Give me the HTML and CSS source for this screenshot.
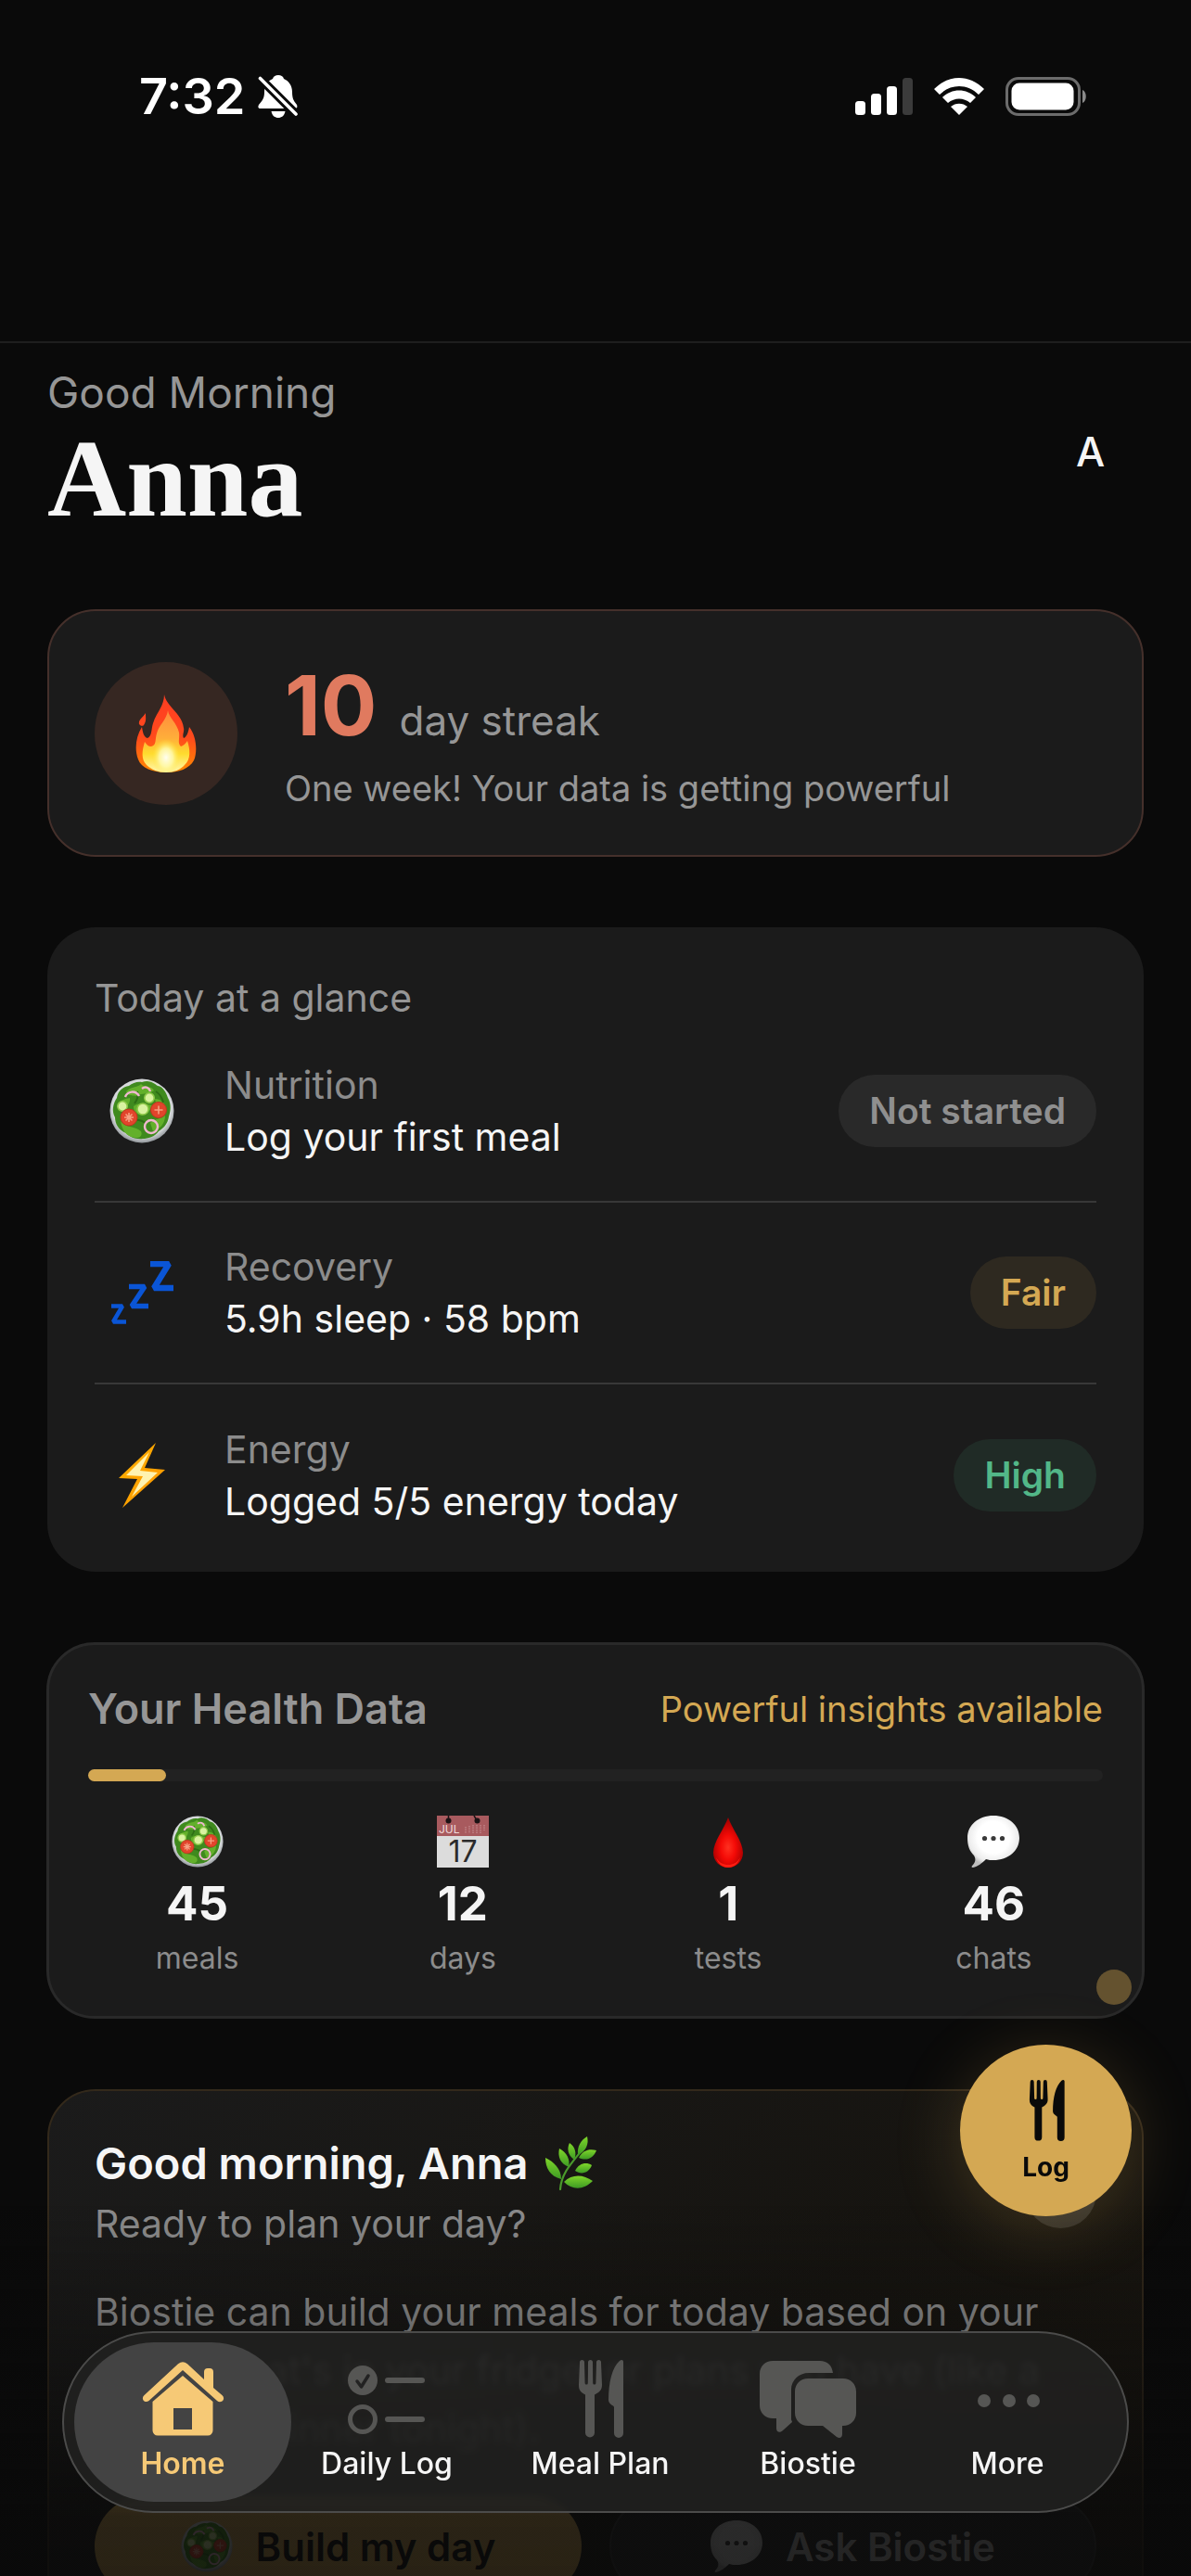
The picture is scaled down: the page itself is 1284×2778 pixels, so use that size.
FILE: index.html
```html
<!DOCTYPE html>
<html lang="en">
<head>
<meta charset="utf-8">
<meta name="viewport" content="width=device-width, initial-scale=1">
<title>Biostie – Home</title>
<link rel="stylesheet" href="styles.css">
</head>
<body>
<svg class="sprite" aria-hidden="true">
  <defs>
    <radialGradient id="gPlate" cx="50%" cy="45%" r="54%"><stop offset=".85" stop-color="#d6d9db"/><stop offset="1" stop-color="#979ca0"/></radialGradient>
    <linearGradient id="gFlame" x1="0" y1="0" x2="0" y2="1"><stop offset="0" stop-color="#ff3d22"/><stop offset=".55" stop-color="#ff4a1c"/><stop offset="1" stop-color="#ff8a00"/></linearGradient>
    <linearGradient id="gFlameIn" x1="0" y1="0" x2="0" y2="1"><stop offset="0" stop-color="#ff8a3c"/><stop offset=".45" stop-color="#ffae3a"/><stop offset=".7" stop-color="#ffdc2e"/><stop offset="1" stop-color="#fff7b0"/></linearGradient>
    <radialGradient id="gCore"><stop offset="0" stop-color="#fffef0"/><stop offset=".5" stop-color="#fff8a8" stop-opacity=".9"/><stop offset="1" stop-color="#ffe53b" stop-opacity="0"/></radialGradient>
    <linearGradient id="gBolt" x1="0" y1="0" x2="1" y2="1"><stop offset="0" stop-color="#ffb300"/><stop offset="1" stop-color="#ff9500"/></linearGradient>
    <radialGradient id="gDrop" cx="50%" cy="60%" r="55%"><stop offset="0" stop-color="#ff3020"/><stop offset=".45" stop-color="#f40a06"/><stop offset="1" stop-color="#a80000"/></radialGradient>
    <radialGradient id="gBubble" cx="50%" cy="42%" r="56%"><stop offset=".55" stop-color="#ffffff"/><stop offset=".85" stop-color="#ececec"/><stop offset="1" stop-color="#bdbdbd"/></radialGradient>
    <linearGradient id="gLeaf" x1="0" y1="0" x2="0" y2="1"><stop offset="0" stop-color="#7fd62a"/><stop offset="1" stop-color="#3d9a24"/></linearGradient>
  </defs>

  <symbol id="salad" viewBox="0 0 70 70">
    <circle cx="35" cy="35" r="34.5" fill="url(#gPlate)"/>
    <path d="M35 4c8-3 13 1 17 4 6 1 9 7 11 13 4 7 3 14 1 20-1 8-6 13-11 16-4 6-12 8-17 8-8 1-14-2-18-6C10 56 6 49 6 42 2 35 4 27 8 21c1-8 7-12 13-13 4-3 9-5 14-4z" fill="#3f8a1e"/>
    <path d="M18 14c6-6 13-4 16-8 4 5 11 1 14 7-6 5-14 2-18 6-5-1-9 1-12-5zM8 30c3-7 9-8 14-9 1 6-4 8-5 13-4 1-7 0-9-4zM26 30c6-5 14-2 20-1-1 7-7 7-11 11-5-1-9-4-9-10zM49 22c6 0 11 4 12 10-6 2-11-3-12-10zM44 48c5-5 12-4 16-8 0 9-6 15-13 17zM12 46c6 8 16 5 22 11 2 4-1 7-4 7-9 0-16-5-18-18z" fill="#63b02b"/>
    <path d="M22 46c6-2 12-2 18 3M30 14c2 5 0 9-3 13M50 14c5 3 7 8 8 12" fill="none" stroke="#2d6d15" stroke-width="2"/>
    <g fill="#d9f2a0" stroke="#8fc94a" stroke-width="1.6">
      <circle cx="43" cy="21" r="5.2"/><circle cx="14" cy="30" r="5.2"/><circle cx="36" cy="33" r="6"/>
    </g>
    <g fill="none" stroke="#f0b8d0" stroke-width="2.400"><path d="M17 20c2-6 11-8 15-1M35 11c4-3 8-1 9 3"/><circle cx="45" cy="52" r="7"/></g>
    <g fill="#e2452c" stroke="#c2351f" stroke-width="1"><circle cx="21" cy="42" r="9"/><circle cx="53" cy="34" r="8.500"/></g>
    <g stroke="#f6a183" stroke-width="1.6"><path d="M16 42h10M21 37v10M48.500 34h9M53 29.500v9M17.500 38.500l7 7M24.500 38.500l-7 7"/></g>
  </symbol>

  <symbol id="utensils" viewBox="0 0 50 84">
    <path fill="currentColor" d="M3 2.500a2.500 2.500 0 0 1 5 0l.6 22.500a1.600 1.600 0 0 0 3.200 0L12 2.500a2.500 2.500 0 0 1 5 0l.2 22.500a1.600 1.600 0 0 0 3.200 0L21 2.500a2.500 2.500 0 0 1 5 0l1 24c.2 6-3 8.500-8 11v41a5 5 0 0 1-10 0v-41C4 35 1.800 32.500 2 26.500z"/>
    <path fill="currentColor" d="M50 2v77a5 5 0 0 1-10 0V51c0-2-6-3-6-8 0-19 4-35 12-42 2-1.800 4-1 4 1z"/>
  </symbol>

  <symbol id="bubble" viewBox="0 0 56 56">
    <path d="M28 0c16 0 28 10 28 24S44 48 28 48c-3 0-5 0-8-1-4 4-9 8-14 9-2 0-2-1 0-3 3-3 3-7 1-10C2 38 0 32 0 24 0 10 12 0 28 0z" fill="url(#gBubble)"/>
    <g fill="#3a3a3a"><circle cx="18.500" cy="24.500" r="2.600"/><circle cx="28" cy="24.500" r="2.600"/><circle cx="37.500" cy="24.500" r="2.600"/></g>
  </symbol>
</svg>

<div class="app">
  <header class="status-bar">
    <div class="status-left">
      <time class="clock">7:32</time>
      <svg class="icon-bell" viewBox="0 0 44 46" aria-label="Silent mode">
        <path fill="#fff" d="M22 0c3 0 5 1 6 4 5 2 9 7 9 14 0 8 2 10 5 14 1 3 0 4-3 4H3c-3 0-3-2-2-4 4-5 6-7 6-14 0-7 4-12 9-14 1-3 3-4 6-4zM14.500 39h15c-1 5-4 7-7.500 7s-6.500-2-7.500-7z"/>
        <path stroke="#0a0a0a" stroke-width="9.500" d="M3 4l40 40"/><path stroke="#fff" stroke-width="3.600" stroke-linecap="round" d="M2.500 3.500l38.500 38.500"/>
      </svg>
    </div>
    <div class="status-right">
      <svg class="icon-signal" viewBox="0 0 62 40" aria-label="Signal"><g fill="#fff"><rect y="25" width="11" height="15" rx="3.500"/><rect x="17" y="17" width="11" height="23" rx="3.500"/><rect x="34" y="9" width="11" height="31" rx="3.500"/></g><rect x="51" width="11" height="40" rx="3.500" fill="#3b3b3b"/></svg>
      <svg class="icon-wifi" viewBox="0 0 54 40" aria-label="Wi-Fi"><g fill="#fff"><path d="M0 12C16-4 38-4 54 12l-6 6C36 6 18 6 6 18z"/><path d="M9 21c10-10 26-10 36 0l-6 6c-7-6-17-6-24 0z"/><path d="M27 40l-9-9c5-4.500 13-4.500 18 0z"/></g></svg>
      <svg class="icon-battery" viewBox="0 0 88 42" aria-label="Battery"><rect x="1.500" y="1.500" width="78" height="39" rx="12.500" fill="none" stroke="#6c6c6c" stroke-width="3"/><rect x="6.500" y="6.500" width="67" height="29" rx="8.500" fill="#fff"/><path d="M83 14c5 2 5 12 0 14z" fill="#8a8a8a"/></svg>
    </div>
  </header>

  <main class="content">
    <section class="greeting">
      <div>
        <p class="greeting-time">Good Morning</p>
        <h1 class="greeting-name">Anna</h1>
      </div>
      <button class="avatar" type="button" aria-label="Profile">A</button>
    </section>

    <section class="card streak">
      <div class="streak-badge">
        <svg class="icon-flame" viewBox="0 0 66 84">
          <path d="M31 0c3 14 19 20 21 36 1 4-2 8 0 11 3-1 5-6 6-12 8 10 9 27 5 36-5 9-16 13-30 13S6 79 3 70C-1 60 0 46 7 35c1 6 2 11 6 12 5-2 4-10 6-16 3-11 12-18 12-31zM11 20c0 6 1 8-2 13-2 2-4 0-5-1-1-5 4-7 7-12z" fill="url(#gFlame)"/>
          <path d="M35 17c1 8 10 14 12 24 1 7-2 11 2 15 3-1 5-3 7-6 3 9 4 20-3 26-4 5-12 8-20 8S17 81 12 76C6 70 7 61 10 51c2 3 4 5 7 5 6-1 4-8 6-14 2-9 11-15 12-25z" fill="url(#gFlameIn)"/>
          <ellipse cx="33" cy="68" rx="15" ry="20" fill="url(#gCore)"/>
        </svg>
      </div>
      <div class="streak-body">
        <p class="streak-line"><strong class="streak-count">10</strong><span class="streak-unit">day streak</span></p>
        <p class="streak-note">One week! Your data is getting powerful</p>
      </div>
    </section>

    <section class="card glance">
      <h2 class="glance-title">Today at a glance</h2>
      <ul class="glance-list">
        <li class="glance-row">
          <span class="glance-icon"><svg class="icon-salad"><use href="#salad"/></svg></span>
          <div class="glance-text"><p class="glance-label">Nutrition</p><p class="glance-value">Log your first meal</p></div>
          <span class="pill pill-muted">Not started</span>
        </li>
        <li class="glance-row">
          <span class="glance-icon">
            <svg class="icon-zzz" viewBox="0 0 68 68"><g fill="none" stroke="#0a55d6" stroke-miterlimit="2"><path stroke-width="6.500" d="M43 3h20L47 29h21"/><path stroke-width="5.500" d="M20 27.500h17L23 48.500h18"/><path stroke-width="4.500" d="M1 48.500h12L3 65.500h14"/></g></svg>
          </span>
          <div class="glance-text"><p class="glance-label">Recovery</p><p class="glance-value">5.9h sleep · 58 bpm</p></div>
          <span class="pill pill-gold">Fair</span>
        </li>
        <li class="glance-row">
          <span class="glance-icon">
            <svg class="icon-bolt" viewBox="0 0 50 70"><path d="M40 0L0 38l20 1L4 70l46-41-22-2z" fill="url(#gBolt)"/><path d="M33 10L8 35l18 1-12 22 28-26-19-2z" fill="#fff3b0"/></svg>
          </span>
          <div class="glance-text"><p class="glance-label">Energy</p><p class="glance-value">Logged 5/5 energy today</p></div>
          <span class="pill pill-green">High</span>
        </li>
      </ul>
    </section>

    <section class="card health">
      <div class="health-head">
        <h2 class="health-title">Your Health Data</h2>
        <p class="health-status">Powerful insights available</p>
      </div>
      <div class="track"><div class="track-fill"></div></div>
      <ul class="stats">
        <li class="stat"><svg class="icon-stat"><use href="#salad"/></svg><strong class="stat-value">45</strong><span class="stat-label">meals</span></li>
        <li class="stat">
          <svg class="icon-stat" viewBox="0 0 56 56">
            <rect width="56" height="56" fill="#dcdcdc"/>
            <rect width="56" height="22" fill="#a85a5e"/>
            <circle cx="12.500" cy="5.500" r="3" fill="#1b1214"/><circle cx="43.500" cy="5.500" r="3" fill="#1b1214"/>
            <path d="M12.500 0v5M40 0l3 5" stroke="#1b1214" stroke-width="1.500"/>
            <path d="M31 12v7M35 11v8M39 10v9M43 10v9M47 10v9M51 10v6" stroke="#c08387" stroke-width="1.500" stroke-dasharray="1.500 1"/>
            <text class="cal-month" x="2" y="19">JUL</text>
            <text class="cal-day" x="28" y="50">17</text>
          </svg>
          <strong class="stat-value">12</strong><span class="stat-label">days</span>
        </li>
        <li class="stat">
          <svg class="icon-stat" viewBox="0 0 56 56"><path d="M28 2c4 12 16 26 16 38 0 9-7 16-16 16s-16-7-16-16C12 28 24 14 28 2z" fill="url(#gDrop)"/><path d="M15 45c3 6 8 8 13 8s10-2 13-8c-2 7-7 11-13 11s-11-4-13-11z" fill="#ff1d12"/></svg>
          <strong class="stat-value">1</strong><span class="stat-label">tests</span>
        </li>
        <li class="stat"><svg class="icon-stat"><use href="#bubble"/></svg><strong class="stat-value">46</strong><span class="stat-label">chats</span></li>
      </ul>
    </section>

    <section class="card coach">
      <div class="coach-head">
        <div class="coach-titles">
          <h2 class="coach-title">Good morning, Anna
            <svg class="icon-herb" viewBox="0 0 56 58">
              <path d="M17 57c1-16 10-26 24-43" fill="none" stroke="#4a9a2c" stroke-width="2.200" stroke-linecap="round"/>
              <g fill="url(#gLeaf)">
                <path d="M18 46C6 43 1 34 1 23c9 4 17 12 17 23z"/><path d="M26 33c-9-4-12-11-10-20 8 4 12 12 10 20z"/><path d="M32 25c-7-5-8-12-5-18 6 4 8 11 5 18z"/><path d="M36 20C35 11 39 4 46 0c2 8-1 16-10 20z"/>
                <path d="M37 23c4-8 11-10 19-8-3 8-10 12-19 8z"/><path d="M33 37c4-8 12-10 18-6-3 8-11 11-18 6z"/><path d="M21 49c9-9 21-8 31-1-10 10-22 10-31 1z"/>
              </g>
            </svg>
          </h2>
          <p class="coach-sub">Ready to plan your day?</p>
        </div>
        <button class="coach-close" type="button" aria-label="Dismiss"></button>
      </div>
      <p class="coach-text">Biostie can build your meals for today based on your goals, what's in your fridge, or plans you have (like a business dinner tonight).</p>
      <div class="coach-actions">
        <button class="action action-gold" type="button"><svg class="icon-stat"><use href="#salad"/></svg>Build my day</button>
        <button class="action action-dark" type="button"><svg class="icon-stat icon-dim"><use href="#bubble"/></svg>Ask Biostie</button>
      </div>
    </section>
  </main>
</div>

<div class="fade"></div>

<div class="floating">
  <span class="floating-dot"></span>
  <button class="fab" type="button"><svg class="icon-fab"><use href="#utensils"/></svg>Log</button>
</div>

<nav class="tab-bar">
  <a class="tab tab-active" href="#home">
    <svg class="icon-tab" viewBox="0 0 104 84"><g fill="currentColor"><path d="M10.500 44.500a4 4 0 0 1-.2-6.300L47 4.200a8 8 0 0 1 10 0L75 21V13a4 4 0 0 1 4-4h2a4 4 0 0 1 4 4v17l9.700 8.200a4 4 0 0 1-.2 6.300 4.500 4.500 0 0 1-5.500-.5L52 11 15.500 44a4.500 4.500 0 0 1-5 .5z"/><path fill-rule="evenodd" d="M52 17l32.500 28v31a5.500 5.500 0 0 1-5.500 5.500H25a5.500 5.500 0 0 1-5.500-5.500V45zM42 52v23h20V52z"/></g></svg>
    <span>Home</span>
  </a>
  <a class="tab" href="#log">
    <svg class="icon-tab" viewBox="0 0 104 84"><circle cx="26" cy="22" r="16" fill="currentColor"/><path d="M20 23l4.500 6L32 17" fill="none" stroke="#222" stroke-width="3.500" stroke-linecap="round" stroke-linejoin="round"/><circle cx="26" cy="64" r="13.500" fill="none" stroke="currentColor" stroke-width="5"/><path d="M53 22h37M53 64h37" stroke="currentColor" stroke-width="6" stroke-linecap="round"/></svg>
    <span>Daily Log</span>
  </a>
  <a class="tab" href="#plan">
    <svg class="icon-tab"><use href="#utensils"/></svg>
    <span>Meal Plan</span>
  </a>
  <a class="tab" href="#biostie">
    <svg class="icon-tab" viewBox="0 0 104 84"><g fill="currentColor"><path d="M14 1h51c8 0 13 5 14 13H53c-11 0-19 8-19 18v32c0 1 1 2 1 3L25 76c-3 3-7 2-7-2V63h-4C6 63 0 57 0 49V15C0 7 6 1 14 1z"/><path d="M52 20h38c8 0 14 6 14 14v23c0 8-6 14-14 14h-1v9c0 4-3 5-6 3L68 71H52c-8 0-14-6-14-14V34c0-8 6-14 14-14z"/></g></svg>
    <span>Biostie</span>
  </a>
  <a class="tab" href="#more">
    <svg class="icon-tab" viewBox="0 0 104 84"><g fill="currentColor"><circle cx="27" cy="44" r="7"/><circle cx="54" cy="44" r="7"/><circle cx="80" cy="44" r="7"/></g></svg>
    <span>More</span>
  </a>
</nav>
</body>
</html>
```
FILE: styles.css
```css
:root {
  --bg: #0a0a0a;
  --card: #1b1b1b;
  --text: #f5f5f5;
  --muted: #969696;
  --gold: #d4a853;
  --gutter: 51px;
}

* { box-sizing: border-box; }

body, h1, h2, p, ul { margin: 0; padding: 0; }

ul { list-style: none; }

button { border: 0; padding: 0; font: inherit; cursor: pointer; }

svg { display: block; flex: none; }

.sprite { position: absolute; width: 0; height: 0; }

body {
  background: var(--bg);
  color: var(--text);
  font-family: Inter, "Liberation Sans", sans-serif;
  font-size: 41px;
}

.app {
  height: 100vh;
  overflow-y: auto;
  scrollbar-width: none;
}

/* Status bar */
.status-bar {
  display: flex;
  justify-content: space-between;
  align-items: flex-start;
  height: 370px;
  padding: 74px 112px 0 150px;
  border-bottom: 2px solid #1e1e1e;
}

.status-left, .status-right { display: flex; align-items: center; height: 60px; }
.status-left { gap: 13px; }
.status-right { gap: 23px; }

.clock { font-size: 54px; line-height: 60px; font-weight: 600; color: #fff; }
.icon-bell { width: 44px; height: 46px; }
.icon-signal { width: 62px; height: 40px; }
.icon-wifi { width: 54px; height: 40px; }
.icon-battery { width: 88px; height: 42px; }

/* Page content */
.content {
  display: flex;
  flex-direction: column;
  gap: 76px;
  padding: 23px var(--gutter) 280px;
}

.greeting { display: flex; justify-content: space-between; align-items: center; }
.greeting-time { font-size: 46px; line-height: 60px; color: var(--muted); }
.greeting-name {
  padding: 4px 0;
  font-family: "Liberation Serif", serif;
  font-size: 118px;
  line-height: 120px;
  font-weight: 700;
}
.avatar {
  width: 115px;
  height: 115px;
  border-radius: 50%;
  background: transparent;
  color: var(--text);
  font-size: 44px;
  font-weight: 500;
}

.card { border-radius: 52px; background: var(--card); }

/* Streak */
.streak {
  display: flex;
  align-items: center;
  gap: 51px;
  padding: 48px 49px;
  border: 2px solid #45302b;
}
.streak-badge {
  display: grid;
  place-items: center;
  width: 154px;
  height: 154px;
  border-radius: 50%;
  background: #362722;
}
.icon-flame { width: 66px; height: 84px; }
.streak-line { display: flex; align-items: baseline; gap: 24px; height: 108px; }
.streak-count { font-size: 90px; line-height: 108px; font-weight: 700; color: #e07a5f; }
.streak-unit { font-size: 44px; line-height: 54px; color: var(--muted); }
.streak-note { margin-top: 11px; font-size: 38px; line-height: 48px; color: var(--muted); }

/* Today at a glance */
.glance { padding: 51px 51px 6px; }
.glance-title { font-size: 41px; line-height: 50px; font-weight: 400; color: var(--muted); }
.glance-row { display: flex; align-items: center; height: 196px; border-bottom: 2px solid #383838; }
.glance-row:last-child { border-bottom: 0; }
.glance-icon { display: grid; place-items: center; width: 102px; margin-right: 38px; }
.glance-text { flex: 1; line-height: 56px; }
.glance-label { color: #8c8c8c; }
.icon-salad { width: 70px; height: 70px; }
.icon-zzz { width: 68px; height: 68px; }
.icon-bolt { width: 50px; height: 70px; }

.pill {
  padding: 0 33px;
  border-radius: 39px;
  font-size: 39px;
  line-height: 78px;
  font-weight: 600;
}
.pill-muted { background: #292929; color: #8f8f8f; }
.pill-gold { background: #2e2920; color: var(--gold); }
.pill-green { background: #202b26; color: #52b788; }

/* Health data */
.health { margin: 0 -1px; padding: 42px; border: 3px solid #292929; }
.health-head { display: flex; justify-content: space-between; align-items: center; line-height: 54px; }
.health-title { font-size: 45px; font-weight: 600; color: var(--muted); }
.health-status { font-size: 38px; color: var(--gold); }
.track { margin-top: 38px; height: 13px; border-radius: 7px; background: #222; }
.track-fill { width: 84px; height: 13px; border-radius: 7px; background: var(--gold); }
.stats { display: grid; grid-template-columns: repeat(4, 1fr); gap: 51px; margin-top: 37px; }
.stat { display: flex; flex-direction: column; align-items: center; gap: 8px; }
.icon-stat { width: 56px; height: 56px; }
.stat-value { font-size: 51px; line-height: 62px; font-weight: 700; }
.stat-label { font-size: 32px; line-height: 40px; color: #8c8c8c; }
.cal-month { font-size: 12px; fill: #f1dcdc; }
.cal-day { font-size: 32px; fill: #2b2b2b; text-anchor: middle; }

/* Coach card */
.coach {
  padding: 47px 49px 49px;
  border: 2px solid #33291b;
  background: linear-gradient(135deg, #1b1b1b, #161410 60%, #1a160f);
}
.coach-head { display: flex; justify-content: space-between; align-items: center; }
.coach-title { display: flex; align-items: center; gap: 18px; font-size: 47px; line-height: 62px; font-weight: 600; }
.icon-herb { width: 56px; height: 58px; }
.coach-sub { margin-top: 6px; line-height: 56px; color: #8c8c8c; }
.coach-close { width: 77px; height: 77px; border-radius: 50%; background: #33312c; }
.coach-text { margin-top: 36px; line-height: 63px; color: var(--muted); }
.coach-actions { display: grid; grid-template-columns: 1fr 1fr; gap: 30px; margin-top: 41px; }
.action {
  display: flex;
  align-items: center;
  justify-content: center;
  gap: 25px;
  height: 108px;
  border-radius: 54px;
  font-size: 42px;
  font-weight: 600;
}
.action-gold { background: var(--gold); color: var(--bg); }
.action-dark { border: 2px solid #333; background: #222; color: #b4b4b4; }
.icon-dim { opacity: .8; }

/* Overlays pinned to the screen */
.fade {
  position: fixed;
  inset: auto 0 0;
  height: 400px;
  background: linear-gradient(to bottom, rgba(10, 10, 10, 0), rgba(10, 10, 10, .27) 30%, rgba(10, 10, 10, .84) 84%, rgba(10, 10, 10, .85));
  pointer-events: none;
}

.floating {
  position: fixed;
  right: 64px;
  bottom: 388px;
  display: flex;
  flex-direction: column;
  align-items: flex-end;
  gap: 43px;
}
.floating-dot { width: 38px; height: 38px; border-radius: 50%; background: #64522f; }
.fab {
  display: flex;
  flex-direction: column;
  align-items: center;
  justify-content: center;
  gap: 12px;
  width: 185px;
  height: 185px;
  border-radius: 50%;
  background: var(--gold);
  box-shadow: 0 12px 72px rgba(212, 168, 83, .22);
  color: var(--bg);
  font-size: 28px;
  line-height: 32px;
  font-weight: 700;
}
.icon-fab { width: 44px; height: 66px; }

.tab-bar {
  position: fixed;
  inset: auto 67px 68px;
  display: grid;
  grid-template-columns: 234fr 206fr 254fr 194fr 236fr;
  padding: 10px 11px;
  border: 2px solid #4b4b4a;
  border-radius: 98px;
  background: rgba(33, 33, 32, .88);
  backdrop-filter: blur(3px);
}
.tab {
  display: flex;
  flex-direction: column;
  align-items: center;
  gap: 7px;
  padding: 19px 0 20px;
  border-radius: 86px;
  color: #565654;
  font-size: 32px;
  line-height: 42px;
  font-weight: 500;
  text-decoration: none;
}
.tab span { color: var(--text); white-space: nowrap; }
.tab-active { background: #434343; color: #f6c976; }
.tab-active span { color: #f6c976; font-weight: 600; }
.icon-tab { width: 104px; height: 84px; }
```
